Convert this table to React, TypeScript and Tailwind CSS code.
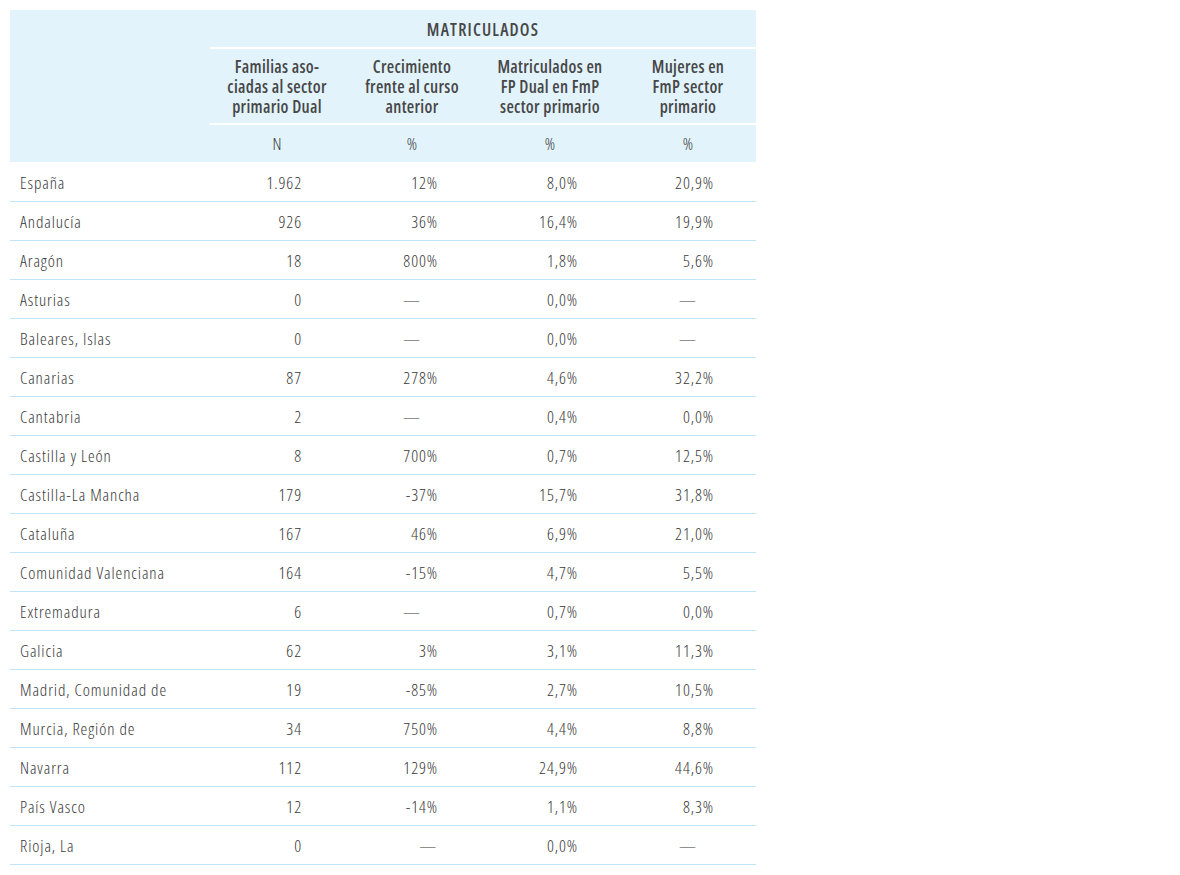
import React from 'react';

type Cell = string | { dash: 'c' | 'r' };

interface Row {
   name: string;
   cells: Cell[];
}

const D: Cell = { dash: 'c' };
const DR: Cell = { dash: 'r' };

const rows: Row[] = [
   { name: 'España', cells: ['1.962', '12%', '8,0%', '20,9%'] },
   { name: 'Andalucía', cells: ['926', '36%', '16,4%', '19,9%'] },
   { name: 'Aragón', cells: ['18', '800%', '1,8%', '5,6%'] },
   { name: 'Asturias', cells: ['0', D, '0,0%', D] },
   { name: 'Baleares, Islas', cells: ['0', D, '0,0%', D] },
   { name: 'Canarias', cells: ['87', '278%', '4,6%', '32,2%'] },
   { name: 'Cantabria', cells: ['2', D, '0,4%', '0,0%'] },
   { name: 'Castilla y León', cells: ['8', '700%', '0,7%', '12,5%'] },
   { name: 'Castilla-La Mancha', cells: ['179', '-37%', '15,7%', '31,8%'] },
   { name: 'Cataluña', cells: ['167', '46%', '6,9%', '21,0%'] },
   { name: 'Comunidad Valenciana', cells: ['164', '-15%', '4,7%', '5,5%'] },
   { name: 'Extremadura', cells: ['6', D, '0,7%', '0,0%'] },
   { name: 'Galicia', cells: ['62', '3%', '3,1%', '11,3%'] },
   { name: 'Madrid, Comunidad de', cells: ['19', '-85%', '2,7%', '10,5%'] },
   { name: 'Murcia, Región de', cells: ['34', '750%', '4,4%', '8,8%'] },
   { name: 'Navarra', cells: ['112', '129%', '24,9%', '44,6%'] },
   { name: 'País Vasco', cells: ['12', '-14%', '1,1%', '8,3%'] },
   { name: 'Rioja, La', cells: ['0', DR, '0,0%', D] },
];

const colWidths = ['w-[134px]', 'w-[136px]', 'w-[140px]', 'w-[136px]'];

const headers = [
   ['Familias aso-', 'ciadas al sector', 'primario Dual'],
   ['Crecimiento', 'frente al curso', 'anterior'],
   ['Matriculados en', 'FP Dual en FmP', 'sector primario'],
   ['Mujeres en', 'FmP sector', 'primario'],
];

const units = ['N', '%', '%', '%'];

// Open Sans trae la variante condensada (75%)
const font = { fontFamily: '"Open Sans", "DejaVu Sans Condensed", sans-serif', fontStretch: '75%' };

export default function App() {
   return (
      <div className="bg-white w-[1180px] h-[875px] pt-[10px] pl-[10px]" style={font}>
         <table className="w-[746px] border-collapse text-[17px] text-[#383838] table-fixed">
            <colgroup>
               <col className="w-[200px]" />
               {colWidths.map((w, i) => (
                  <col key={i} className={w} />
               ))}
            </colgroup>
            <thead className="bg-[#e2f3fc]">
               <tr>
                  <th className="h-[38px]" />
                  <th
                     colSpan={4}
                     className="h-[38px] pt-[2px] text-center font-semibold tracking-[1.2px] text-[#474747] border-b-2 border-white"
                  >
                     MATRICULADOS
                  </th>
               </tr>
               <tr>
                  <th />
                  {headers.map((h, i) => (
                     <th
                        key={i}
                        className="h-[76px] pt-[2px] text-center font-semibold tracking-[0.3px] text-[#474747] leading-[20px] border-b-2 border-white align-middle"
                     >
                        {h.map((line, j) => (
                           <div key={j}>{line}</div>
                        ))}
                     </th>
                  ))}
               </tr>
               <tr>
                  <th className="h-[38px]" />
                  {units.map((u, i) => (
                     <th key={i} className="h-[38px] text-center font-light">
                        {u}
                     </th>
                  ))}
               </tr>
            </thead>
            <tbody className="font-light tracking-[0.9px]">
               {rows.map((r) => (
                  <tr key={r.name} className="border-b border-[#bfe4f6]">
                     <td className="h-[39px] pt-[3px] pl-[10px] text-left">{r.name}</td>
                     {r.cells.map((c, i) =>
                        typeof c === 'string' ? (
                           <td key={i} className="h-[39px] pt-[3px] text-right pr-[42px]">
                              {c}
                           </td>
                        ) : c.dash === 'c' ? (
                           <td key={i} className="h-[39px] pt-[3px] text-center">
                              —
                           </td>
                        ) : (
                           <td key={i} className="h-[39px] pt-[3px] text-right pr-[43px]">
                              —
                           </td>
                        )
                     )}
                  </tr>
               ))}
            </tbody>
         </table>
      </div>
   );
}
